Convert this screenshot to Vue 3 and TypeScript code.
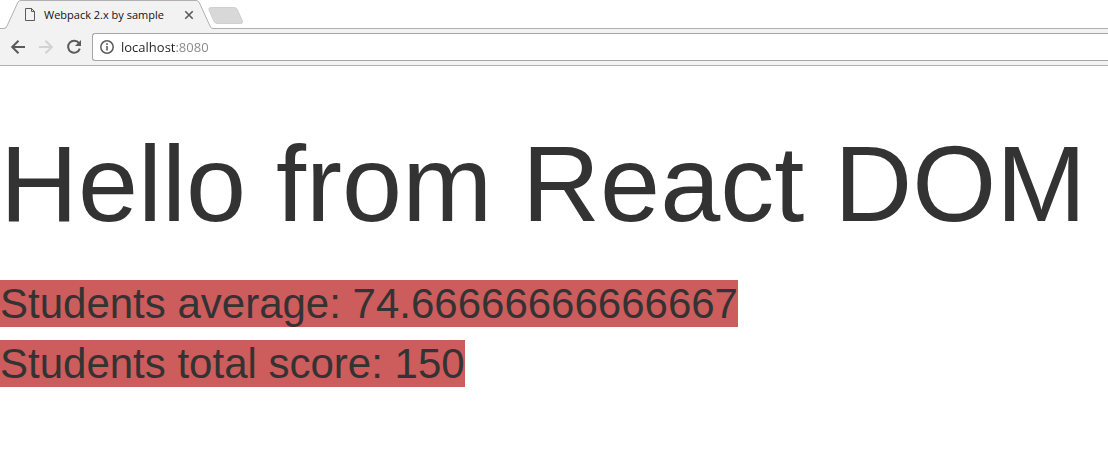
<script setup lang="ts">
import { computed, ref } from 'vue'

const title = 'Webpack 2.x by sample'
const address = ref('localhost:8080')
const scores = [90, 83, 51]
const total = 150
const average = computed(() => scores.reduce((sum, n) => sum + n, 0) / scores.length)
</script>

<template>
  <div class="browser">
    <header>
      <div class="tabs">
        <div class="tab">
          <svg class="tab-shape" width="214" height="29" viewBox="0 0 214 29" aria-hidden="true">
            <path d="M0 29V28.5H4Q6 28.5 7 26L18 2Q19 .5 21 .5H196Q198 .5 199 2L210 26Q211 28.5 213 28.5H214V29Z" fill="#f2f2f2" />
            <path d="M0 28.5H4Q6 28.5 7 26L18 2Q19 .5 21 .5H196Q198 .5 199 2L210 26Q211 28.5 213 28.5H214" fill="none" stroke="#b0b0b0" />
          </svg>
          <button class="tab-name" type="button">
            <svg width="12" height="14" viewBox="0 0 12 14" fill="none" stroke="#5a5a5a" aria-hidden="true">
              <path d="M1 .5H6.500L9.500 3.500V12.500H.5V.5H6.500V3.500H9.500" />
            </svg>
            <span>{{ title }}</span>
          </button>
          <button class="close" type="button" aria-label="Close tab">
            <svg width="10" height="10" viewBox="0 0 10 10" fill="none" stroke="#5a5a5a" stroke-width="1.600">
              <path d="M1.300 1.300L8.700 8.700M8.700 1.300L1.300 8.700" />
            </svg>
          </button>
        </div>
        <button class="new-tab" type="button" aria-label="New tab">
          <svg width="36" height="18" viewBox="0 0 36 18">
            <path d="M3 1.500H26Q28 1.500 29 3L34.500 15Q35 17.500 33 17.500H9Q7 17.500 6 15.500L1 4Q0 1.500 3 1.500Z" fill="#d8d8d8" stroke="#d0d0d0" />
          </svg>
        </button>
      </div>
      <nav class="toolbar">
        <button class="tool" type="button" aria-label="Back">
          <svg width="16" height="16" viewBox="0 0 16 16" fill="none" stroke="#5a5a5a" stroke-width="2">
            <path d="M15 8H2.500M8.500 1.700L2.200 8L8.500 14.300" />
          </svg>
        </button>
        <button class="tool" type="button" aria-label="Forward" disabled>
          <svg width="16" height="16" viewBox="0 0 16 16" fill="none" stroke="#d2d2d2" stroke-width="2">
            <path d="M1 8H13.500M7.500 1.700L13.800 8L7.500 14.300" />
          </svg>
        </button>
        <button class="tool" type="button" aria-label="Reload">
          <svg width="16" height="16" viewBox="0 0 16 16" fill="none">
            <path d="M13 4.200A6 6 0 1 0 13.800 9.700" stroke="#5a5a5a" stroke-width="2" />
            <path d="M15 1V7H9Z" fill="#5a5a5a" />
          </svg>
        </button>
        <div class="address">
          <svg width="14" height="14" viewBox="0 0 14 14" fill="none" aria-hidden="true">
            <circle cx="7" cy="7" r="6.200" stroke="#5a5a5a" stroke-width="1.500" />
            <path d="M7 6V10.500M7 3.300V5" stroke="#5a5a5a" stroke-width="1.600" />
          </svg>
          <input v-model="address" type="text" aria-label="Address" spellcheck="false" />
        </div>
      </nav>
    </header>
    <main>
      <h1>Hello from React DOM</h1>
      <div class="line"><span>Students average: {{ average }}</span></div>
      <div class="line"><span>Students total score: {{ total }}</span></div>
    </main>
  </div>
</template>

<style>
body {
  background: #fff;
}
</style>

<style scoped>
.browser {
  overflow: hidden;
  font-family: "Liberation Sans", Arial, sans-serif;
  color: #333;
}

button {
  padding: 0;
  border: 0;
  background: none;
  font: inherit;
  color: inherit;
}

svg {
  display: block;
  flex: none;
}

.tabs {
  display: flex;
  height: 29px;
  background: linear-gradient(#b0b0b0, #b0b0b0) bottom / 100% 1px no-repeat;
}

.tab {
  position: relative;
  display: flex;
  align-items: center;
  justify-content: space-between;
  box-sizing: border-box;
  width: 208px;
  padding: 0 14px 0 25px;
}

.tab-shape {
  position: absolute;
  top: 0;
  left: 0;
}

.tab-name,
.close {
  position: relative;
}

.tab-name {
  display: flex;
  align-items: center;
  gap: 7px;
  font-family: "Open Sans", "Noto Sans", sans-serif;
  font-size: 11px;
  line-height: 16px;
  white-space: nowrap;
  color: #111;
}

.new-tab {
  align-self: center;
}

.toolbar {
  display: flex;
  align-items: center;
  gap: 12px;
  height: 36px;
  padding-left: 10px;
  border-bottom: 1px solid #b0b0b0;
  background: #f2f2f2;
}

.address {
  display: flex;
  flex: 1;
  align-items: center;
  gap: 7px;
  height: 26px;
  margin-left: -2px;
  padding-left: 7px;
  border: 1px solid #a6a6a6;
  border-right: 0;
  border-radius: 3px 0 0 3px;
  background: #fff;
}

input {
  flex: 1;
  min-width: 0;
  padding: 0;
  border: 0;
  outline: 0;
  background: linear-gradient(90deg, #222 55px, #888 55px);
  background-clip: text;
  -webkit-text-fill-color: transparent;
  font-family: "Open Sans", "Noto Sans", sans-serif;
  font-size: 13px;
  line-height: 20px;
}

main {
  padding-bottom: 60px;
  font-size: 42px;
  line-height: 60px;
}

h1 {
  margin: 58px 0 31px;
  font-size: 108px;
  font-weight: 400;
  line-height: 119px;
  white-space: nowrap;
}

.line span {
  background: #cd5c5c;
}
</style>
